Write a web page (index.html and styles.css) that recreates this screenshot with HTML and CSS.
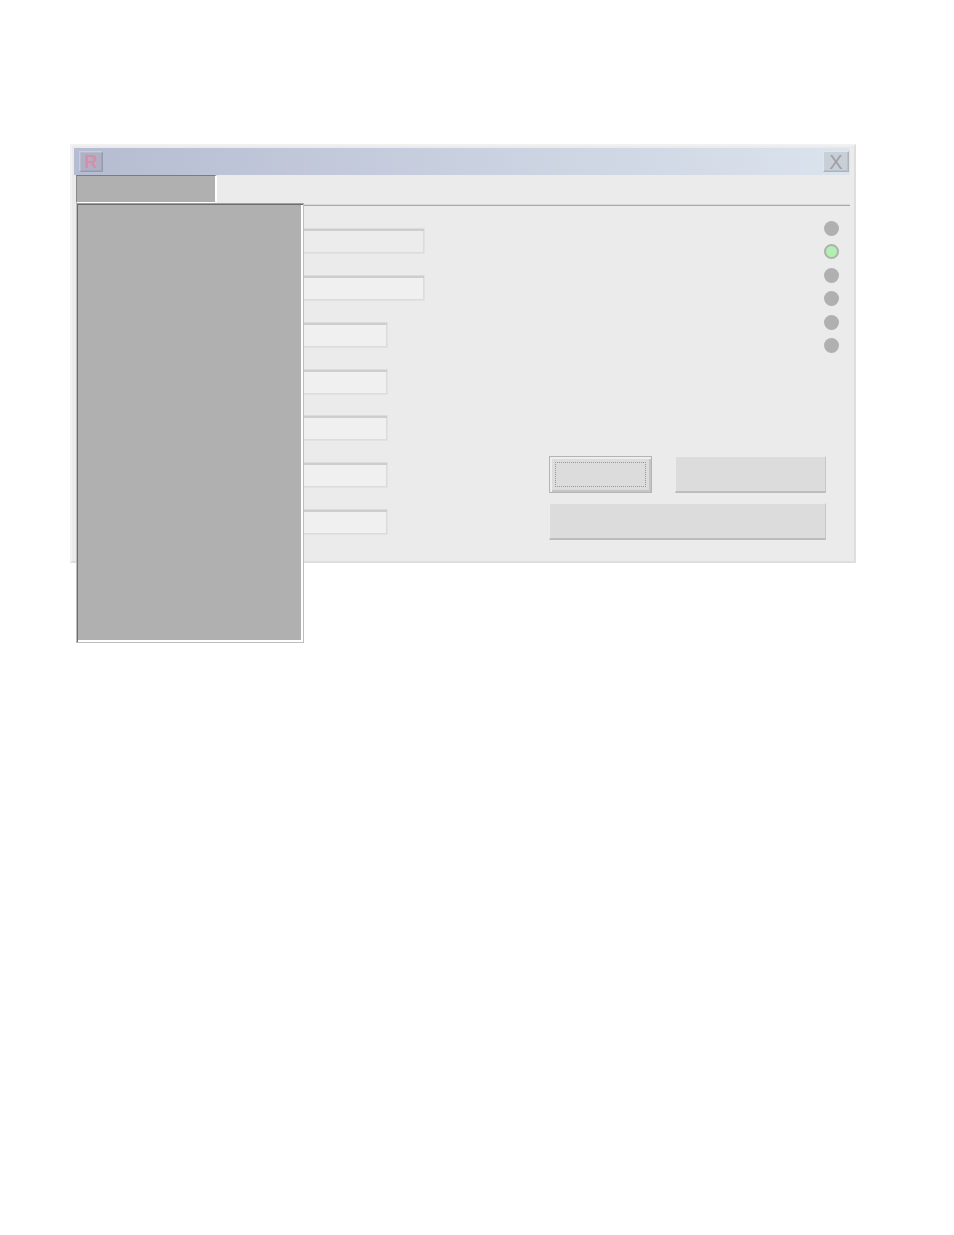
FILE: index.html
```html
<!DOCTYPE html>
<html lang="en">
<head>
<meta charset="utf-8">
<title>Dialog</title>
<link rel="stylesheet" href="styles.css">
</head>
<body>
<div class="window">
  <header class="titlebar">
    <span class="app-icon">R</span>
    <button class="close" type="button">X</button>
  </header>
  <div class="tabbar">
    <div class="tab"></div>
    <div class="tabline"></div>
  </div>
  <div class="content">
    <div class="fields">
      <input class="field wide first" type="text" readonly>
      <input class="field wide" type="text" readonly>
      <input class="field" type="text" readonly>
      <input class="field" type="text" readonly>
      <input class="field" type="text" readonly>
      <input class="field" type="text" readonly>
      <input class="field" type="text" readonly>
    </div>
    <div class="side">
      <div class="leds">
        <span class="led"></span>
        <span class="led on"></span>
        <span class="led"></span>
        <span class="led"></span>
        <span class="led"></span>
        <span class="led"></span>
      </div>
      <div class="actions">
        <button class="btn focused" type="button"></button>
        <button class="btn" type="button"></button>
        <button class="btn span" type="button"></button>
      </div>
    </div>
  </div>
  <div class="popup"></div>
</div>
</body>
</html>
```

FILE: styles.css
```css
* { box-sizing: border-box; }
html, body { margin: 0; background: #fff; }
body { height: 1235px; padding: 144px 0 0 70px; font-family: "Liberation Sans", Arial, sans-serif; }

.window {
  position: relative;
  width: 786px;
  height: 419px;
  padding: 2px 4px 0 2px;
  background: #ebebeb;
  border: 2px solid;
  border-color: #f1f1f1 #dedede #dedede #f3f3f3;
}

.titlebar {
  display: flex;
  align-items: center;
  justify-content: space-between;
  height: 27px;
  padding: 0 1px 0 5px;
  background: linear-gradient(90deg, #b6bcd1 0%, #dbe3ed 100%);
}
.app-icon {
  display: flex;
  align-items: center;
  justify-content: center;
  width: 24px;
  height: 21px;
  background: #adb1c3;
  border: 1px solid;
  border-color: #c9ccd9 #989baa #989baa #c9ccd9;
  box-shadow: inset 1px 1px 0 #b8bbcb, inset -1px -1px 0 #a3a6b6;
  color: #d48fab;
  font-size: 18px;
  font-weight: 700;
  line-height: 1;
}
.close {
  display: flex;
  align-items: center;
  justify-content: center;
  width: 26px;
  height: 21px;
  padding: 0;
  background: #c9cfd7;
  border: 1px solid;
  border-color: #e0e5eb #adb2b9 #adb2b9 #e0e5eb;
  box-shadow: inset -1px -1px 0 #bcc1c8;
  color: #9ca1a8;
  font-family: "Liberation Sans", Arial, sans-serif;
  font-size: 20px;
  line-height: 1;
}

.tabbar {
  display: flex;
  align-items: flex-end;
  height: 31px;
  padding-left: 2px;
}
.tab {
  width: 141px;
  height: 28px;
  margin-bottom: 3px;
  background: #b0b0b0;
  border-top: 1px solid #7c7c7c;
  border-left: 1px solid #8a8a8a;
  border-right: 2px solid #fff;
  border-bottom: 1px solid #fff;
}
.tabline {
  flex: 1;
  height: 2px;
  background: #a9a9a9;
  border-top: 1px solid #dadada;
}

.content { display: flex; }
.fields {
  display: flex;
  flex-direction: column;
  align-items: flex-start;
  gap: 20.85px;
  width: 225px;
  margin: 22px 0 0 126px;
}
.field {
  display: block;
  width: 188px;
  height: 26px;
  padding: 0;
  background: #f0f0f0;
  border: 1px solid #e2e2e2;
  border-top-color: #dcdcdc;
  box-shadow: inset 0 2px 0 #cdcdcd, inset -1px -1px 0 #dcdcdc;
  outline: none;
}
.field.wide { width: 225px; }
.field.first { background: #ececec; }

.side {
  display: flex;
  flex-direction: column;
  align-items: flex-start;
  width: 290px;
  margin: 15px 0 0 124px;
}
.leds {
  display: flex;
  flex-direction: column;
  align-self: flex-end;
  gap: 8.4px;
}
.led {
  display: block;
  width: 15px;
  height: 15px;
  border-radius: 50%;
  background: #b0b0b0;
}
.led.on {
  background: #b0f0b0;
  border: 2px solid #b0b0b0;
}

.actions {
  display: grid;
  grid-template-columns: 103px 151px;
  column-gap: 23px;
  row-gap: 10px;
  width: 277px;
  margin-top: 103px;
}
.btn {
  display: block;
  height: 37px;
  padding: 0;
  background: #dcdcdc;
  border: 1px solid;
  border-color: #ececec #c6c6c6 #bcbcbc #ececec;
  border-bottom-width: 2px;
}
.btn.span { grid-column: 1 / -1; }
.btn.focused {
  border: 1px solid #b4b4b4;
  box-shadow: inset 2px 2px 0 #eeeeee, inset -2px -2px 0 #c4c4c4;
  outline: 1px dotted #999;
  outline-offset: -7px;
}

.popup {
  position: absolute;
  left: 4px;
  top: 57px;
  width: 228px;
  height: 440px;
  background: #b0b0b0;
  border: 1px solid #bdbdbd;
  border-top-color: #a0a0a0;
  box-shadow: inset 1px 1px 0 #6c6c6c, inset -2px -2px 0 #fff;
}
```
